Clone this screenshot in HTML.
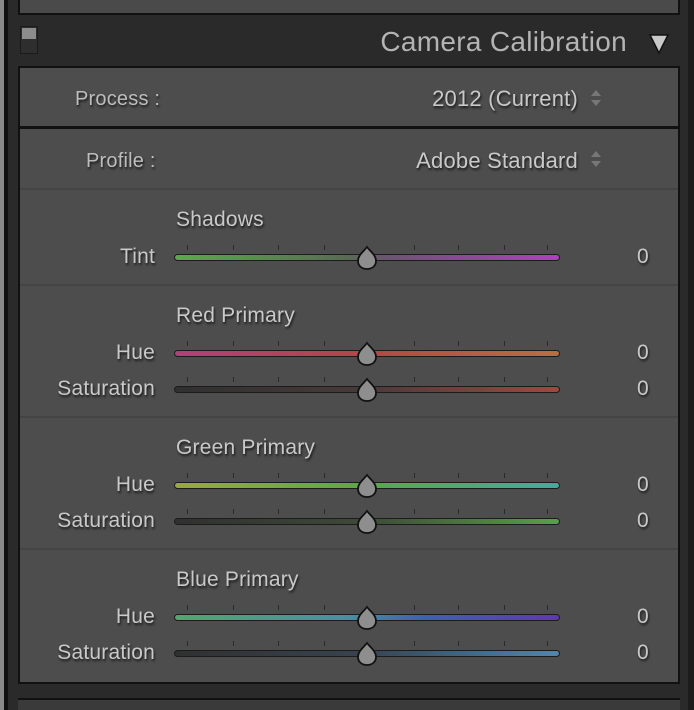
<!DOCTYPE html>
<html><head><meta charset="utf-8"><style>
*{margin:0;padding:0;box-sizing:border-box}
body{width:694px;height:710px;background:#2a2a2a;position:relative;overflow:hidden;font-family:"Liberation Sans",sans-serif}
.abs{position:absolute}
.t{position:absolute;color:#c9c9c9;font-size:21px;text-shadow:1px 2px 2px #1a1a1a;white-space:nowrap;letter-spacing:0.2px}
.lbl{right:539px;text-align:right}
.val{left:637px}
.trk{position:absolute;left:174px;width:386px;height:7px;border-radius:4px;border:1.5px solid #1c1c1c}
.sep{position:absolute;left:20px;width:658px;height:2px;background:#444}
</style></head><body>
<div class="abs" style="left:0;top:0;width:4px;height:710px;background:#8a8a8a"></div>
<div class="abs" style="left:4px;top:0;width:4px;height:710px;background:#111"></div>
<div class="abs" style="left:688px;top:0;width:6px;height:710px;background:#1c1c1c"></div>
<div class="abs" style="left:18px;top:-4px;width:662px;height:19px;background:#4a4a4a;border:2px solid #111"></div>
<div class="abs" style="left:20px;top:26px;width:18px;height:28px;background:#2e2e2e;border:1px solid #1a1a1a"></div>
<div class="abs" style="left:22px;top:28px;width:14px;height:11px;background:#8c8c8c"></div>
<div class="t" style="right:67px;top:26px;font-size:28px;color:#b4b4b4;text-shadow:none;letter-spacing:0.3px">Camera Calibration</div>
<svg class="abs" style="left:648px;top:33px" width="22" height="22"><polygon points="2,2 20,2 11,20" fill="#c8c8c8" stroke="#111" stroke-width="1.5"/></svg>
<div class="abs" style="left:18px;top:66px;width:662px;height:618px;background:#4d4d4d;border:2px solid #111"></div>
<div class="abs" style="left:20px;top:126px;width:658px;height:3px;background:#111"></div>
<div class="sep" style="top:188px"></div>
<div class="sep" style="top:284px"></div>
<div class="sep" style="top:416px"></div>
<div class="sep" style="top:548px"></div>
<div class="abs" style="left:18px;top:698px;width:662px;height:2px;background:#111"></div>
<div class="abs" style="left:18px;top:700px;width:662px;height:10px;background:#3a3a3a"></div>

<div class="t" style="left:75px;top:88px;font-size:20px;color:#bdbdbd">Process :</div>
<div class="t" style="right:116px;top:86px;font-size:22px">2012 (Current)</div>
<div class="t" style="left:86px;top:150px;font-size:20px;color:#bdbdbd">Profile :</div>
<div class="t" style="right:116px;top:148px;font-size:22px">Adobe Standard</div>
<svg class="abs" style="left:590px;top:89px" width="12" height="18"><polygon points="6,1 11,7 1,7" fill="#777"/><polygon points="6,17 11,11 1,11" fill="#777"/></svg>
<svg class="abs" style="left:590px;top:150px" width="12" height="18"><polygon points="6,1 11,7 1,7" fill="#777"/><polygon points="6,17 11,11 1,11" fill="#777"/></svg>

<div class="t" style="left:176px;top:208px">Shadows</div>
<div class="t" style="left:176px;top:304px">Red Primary</div>
<div class="t" style="left:176px;top:436px">Green Primary</div>
<div class="t" style="left:176px;top:568px">Blue Primary</div>

<div class="t lbl" style="top:245px">Tint</div>
<div class="t lbl" style="top:341px">Hue</div>
<div class="t lbl" style="top:377px">Saturation</div>
<div class="t lbl" style="top:473px">Hue</div>
<div class="t lbl" style="top:509px">Saturation</div>
<div class="t lbl" style="top:605px">Hue</div>
<div class="t lbl" style="top:641px">Saturation</div>
<div class="t val" style="top:245px">0</div>
<div class="t val" style="top:341px">0</div>
<div class="t val" style="top:377px">0</div>
<div class="t val" style="top:473px">0</div>
<div class="t val" style="top:509px">0</div>
<div class="t val" style="top:605px">0</div>
<div class="t val" style="top:641px">0</div>

<div class="trk" style="top:254px;background:linear-gradient(90deg,#5aaa4a,#5a6a55 45%,#6a5570 55%,#b040c0)"></div>
<div class="trk" style="top:350px;background:linear-gradient(90deg,#b0407a,#b04848 50%,#b87040)"></div>
<div class="trk" style="top:386px;background:linear-gradient(90deg,#303030,#4a3a3a 50%,#a04840)"></div>
<div class="trk" style="top:482px;background:linear-gradient(90deg,#9aa840,#5aa848 50%,#48a8a0)"></div>
<div class="trk" style="top:518px;background:linear-gradient(90deg,#303030,#3e4a38 50%,#5aa048)"></div>
<div class="trk" style="top:614px;background:linear-gradient(90deg,#50a870,#4890a0 45%,#4060b0 65%,#6038b0)"></div>
<div class="trk" style="top:650px;background:linear-gradient(90deg,#303030,#384450 50%,#4888b8)"></div>

<svg class="abs" style="left:0;top:0" width="694" height="710">
<defs>
<g id="tk" fill="#2a2a2a"><rect x="187" y="0" width="1" height="5"/><rect x="233" y="0" width="1" height="5"/><rect x="278" y="0" width="1" height="5"/><rect x="324" y="0" width="1" height="5"/><rect x="414" y="0" width="1" height="5"/><rect x="458" y="0" width="1" height="5"/><rect x="504" y="0" width="1" height="5"/><rect x="547" y="0" width="1" height="5"/></g>
<g id="th"><path d="M0,-11 C3,-7 9,-3 9,3 C9,8 5,11 0,11 C-5,11 -9,8 -9,3 C-9,-3 -3,-7 0,-11 Z" fill="#8e8e8e" stroke="#111" stroke-width="1.8"/></g>
</defs>
<use href="#tk" y="245"/><use href="#tk" y="341"/><use href="#tk" y="377"/><use href="#tk" y="473"/><use href="#tk" y="509"/><use href="#tk" y="605"/><use href="#tk" y="641"/>
<use href="#th" x="367" y="258"/><use href="#th" x="367" y="354"/><use href="#th" x="367" y="390"/><use href="#th" x="367" y="486"/><use href="#th" x="367" y="522"/><use href="#th" x="367" y="618"/><use href="#th" x="367" y="654"/>
</svg>
</body></html>
